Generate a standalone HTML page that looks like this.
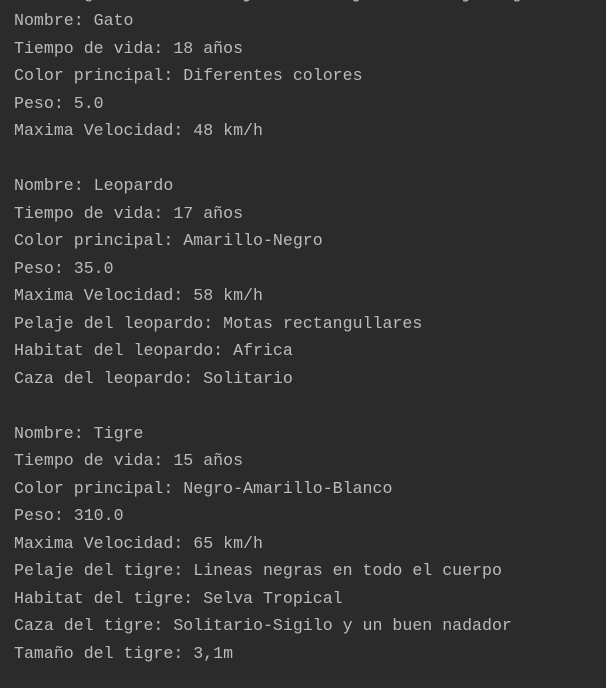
<!DOCTYPE html>
<html><head><meta charset="utf-8"><style>
html,body{margin:0;padding:0;background:#2b2b2b;width:606px;height:688px;overflow:hidden}
pre{position:absolute;left:14px;top:-20.5px;width:592px;overflow:hidden;margin:0;font-family:"Liberation Mono",monospace;font-size:16.6px;line-height:27.5px;color:#bbbbbb;white-space:pre}
</style></head><body>
<pre>"C:\Program Files\Java\jdk-17\bin\java.exe" -javaag
Nombre: Gato
Tiempo de vida: 18 años
Color principal: Diferentes colores
Peso: 5.0
Maxima Velocidad: 48 km/h

Nombre: Leopardo
Tiempo de vida: 17 años
Color principal: Amarillo-Negro
Peso: 35.0
Maxima Velocidad: 58 km/h
Pelaje del leopardo: Motas rectangullares
Habitat del leopardo: Africa
Caza del leopardo: Solitario

Nombre: Tigre
Tiempo de vida: 15 años
Color principal: Negro-Amarillo-Blanco
Peso: 310.0
Maxima Velocidad: 65 km/h
Pelaje del tigre: Lineas negras en todo el cuerpo
Habitat del tigre: Selva Tropical
Caza del tigre: Solitario-Sigilo y un buen nadador
Tamaño del tigre: 3,1m</pre>
</body></html>
